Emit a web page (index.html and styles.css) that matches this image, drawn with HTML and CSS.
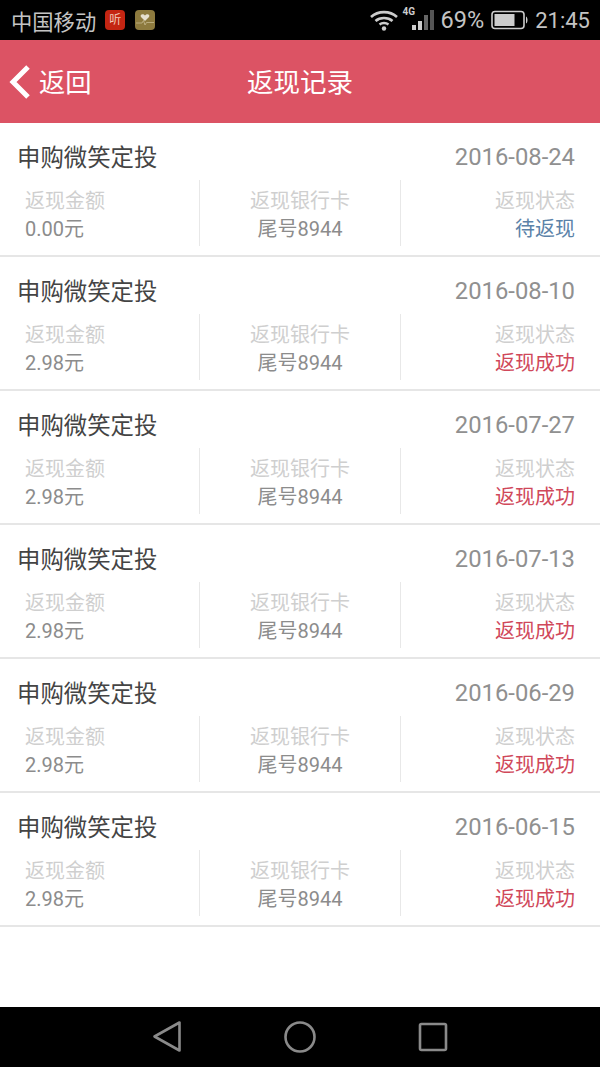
FILE: index.html
```html
<!doctype html>
<html>
  <head>
    <meta charset="utf-8">
    <meta name="viewport" content="width=device-width, initial-scale=1.0">
    <title>返现记录</title>
    <link rel="stylesheet" href="styles.css">
  </head>
  <body>
    <div class="phone">

      <!-- status bar -->
      <div class="status">
        <span class="carrier">中国移动</span>
        <span class="app-icon app-red">听</span>
        <svg class="app-icon" viewBox="0 0 20 20" width="20" height="20">
          <rect width="20" height="20" rx="4" fill="#8d7a3e"/>
          <path d="M10 11 L6 7 C4.500 4.500 8 3 10 5.500 C12 3 15.500 4.500 14 7 Z" fill="#e6e0cf"/>
          <path d="M1 13 H7 L8.500 10.500 L10 15 L11.500 12.500 H19" fill="none" stroke="#c5b98e" stroke-width="0.8"/>
        </svg>
        <span class="status-right">
          <svg class="wifi" viewBox="0 0 30 22" width="30" height="22">
            <path d="M2 8 C9 1.500 21 1.500 28 8" fill="none" stroke="#ccc" stroke-width="2.600"/>
            <path d="M6.500 12 C11 8 19 8 23.500 12" fill="none" stroke="#ccc" stroke-width="2.600"/>
            <path d="M10.500 15.500 C13 13.500 17 13.500 19.500 15.500" fill="none" stroke="#ccc" stroke-width="2.400"/>
            <circle cx="15" cy="19.500" r="2.200" fill="#ccc"/>
          </svg>
          <span class="signal">
            <span class="net">4G</span>
            <span class="bar bar1"></span>
            <span class="bar bar2"></span>
            <span class="bar bar3"></span>
            <span class="bar bar4"></span>
          </span>
          <span class="percent">69%</span>
          <svg class="battery" viewBox="0 0 38 20" width="38" height="20">
            <rect x="1" y="1.500" width="32" height="17" rx="3" fill="none" stroke="#ccc" stroke-width="1.600"/>
            <rect x="3.500" y="4" width="20" height="12" fill="#ccc"/>
            <path d="M35 6.500 C37 7.500 37 12.500 35 13.500 Z" fill="#ccc"/>
          </svg>
          <span class="clock">21:45</span>
        </span>
      </div>

      <!-- header -->
      <div class="header">
        <div class="back">
          <svg viewBox="0 0 24 36" width="24" height="36">
            <path d="M20 3 L5 18 L20 33" fill="none" stroke="#fff" stroke-width="5"/>
          </svg>
          <span class="back-text">返回</span>
        </div>
        <div class="title">返现记录</div>
      </div>

      <!-- list -->
      <div class="list">

        <div class="record">
          <div class="record-top"><span class="name">申购微笑定投</span><span class="date">2016-08-24</span></div>
          <div class="cols">
            <div class="col col-left"><span class="label">返现金额</span><span class="value">0.00元</span></div>
            <div class="col col-mid"><span class="label">返现银行卡</span><span class="value">尾号8944</span></div>
            <div class="col col-right"><span class="label">返现状态</span><span class="value pending">待返现</span></div>
          </div>
        </div>

        <div class="record">
          <div class="record-top"><span class="name">申购微笑定投</span><span class="date">2016-08-10</span></div>
          <div class="cols">
            <div class="col col-left"><span class="label">返现金额</span><span class="value">2.98元</span></div>
            <div class="col col-mid"><span class="label">返现银行卡</span><span class="value">尾号8944</span></div>
            <div class="col col-right"><span class="label">返现状态</span><span class="value success">返现成功</span></div>
          </div>
        </div>

        <div class="record">
          <div class="record-top"><span class="name">申购微笑定投</span><span class="date">2016-07-27</span></div>
          <div class="cols">
            <div class="col col-left"><span class="label">返现金额</span><span class="value">2.98元</span></div>
            <div class="col col-mid"><span class="label">返现银行卡</span><span class="value">尾号8944</span></div>
            <div class="col col-right"><span class="label">返现状态</span><span class="value success">返现成功</span></div>
          </div>
        </div>

        <div class="record">
          <div class="record-top"><span class="name">申购微笑定投</span><span class="date">2016-07-13</span></div>
          <div class="cols">
            <div class="col col-left"><span class="label">返现金额</span><span class="value">2.98元</span></div>
            <div class="col col-mid"><span class="label">返现银行卡</span><span class="value">尾号8944</span></div>
            <div class="col col-right"><span class="label">返现状态</span><span class="value success">返现成功</span></div>
          </div>
        </div>

        <div class="record">
          <div class="record-top"><span class="name">申购微笑定投</span><span class="date">2016-06-29</span></div>
          <div class="cols">
            <div class="col col-left"><span class="label">返现金额</span><span class="value">2.98元</span></div>
            <div class="col col-mid"><span class="label">返现银行卡</span><span class="value">尾号8944</span></div>
            <div class="col col-right"><span class="label">返现状态</span><span class="value success">返现成功</span></div>
          </div>
        </div>

        <div class="record">
          <div class="record-top"><span class="name">申购微笑定投</span><span class="date">2016-06-15</span></div>
          <div class="cols">
            <div class="col col-left"><span class="label">返现金额</span><span class="value">2.98元</span></div>
            <div class="col col-mid"><span class="label">返现银行卡</span><span class="value">尾号8944</span></div>
            <div class="col col-right"><span class="label">返现状态</span><span class="value success">返现成功</span></div>
          </div>
        </div>

      </div>

      <!-- android nav buttons -->
      <div class="nav">
        <svg viewBox="0 0 30 34" width="30" height="34">
          <path d="M27.500 2.500 V30.500 L2.500 16.500 Z" fill="none" stroke="#8a8a8a" stroke-width="2.600" stroke-linejoin="round"/>
        </svg>
        <svg viewBox="0 0 34 34" width="34" height="34">
          <circle cx="17" cy="17" r="14.500" fill="none" stroke="#8a8a8a" stroke-width="2.600"/>
        </svg>
        <svg viewBox="0 0 30 30" width="30" height="30">
          <rect x="2" y="2" width="26" height="26" rx="1.500" fill="none" stroke="#8a8a8a" stroke-width="2.600"/>
        </svg>
      </div>

    </div>
  </body>
</html>
```

FILE: styles.css
```css
* {
  box-sizing: border-box;
}

body {
  margin: 0;
  background-color: white;
  font-family: Roboto, "Noto Sans CJK SC", sans-serif;
}

.phone {
  width: 600px;
  height: 1067px;
  display: flex;
  flex-direction: column;
  overflow: hidden;
}

/* status bar */
.status {
  height: 40px;
  padding: 0 10px 0 11px;
  display: flex;
  align-items: center;
  background-color: black;
  color: #c4c4c4;
}
.carrier {
  font-size: 21.300px;
  margin-right: 9px;
}
.app-icon {
  width: 20px;
  height: 20px;
  margin-right: 10px;
  flex-shrink: 0;
}
.app-red {
  background-color: #c42512;
  border-radius: 4px;
  color: #f0c8b8;
  font-size: 12px;
  line-height: 20px;
  text-align: center;
}
.status-right {
  margin-left: auto;
  display: flex;
  align-items: center;
}
.wifi {
  margin-right: 4px;
}
.signal {
  position: relative;
  width: 31px;
  height: 22px;
  margin-bottom: 2px;
  display: flex;
  align-items: flex-end;
  justify-content: flex-end;
  gap: 2px;
  margin-right: 7px;
}
.net {
  position: absolute;
  left: 0;
  top: -2px;
  font-size: 10px;
  font-weight: bold;
  color: #ccc;
}
.bar {
  width: 4px;
  background-color: #ccc;
}
.bar1 { height: 5px; }
.bar2 { height: 9px; }
.bar3 { height: 15px; background-color: #666; }
.bar4 { height: 20px; background-color: #555; }
.percent {
  font-size: 23.500px;
  margin-right: 7px;
}
.battery {
  margin-right: 6px;
}
.clock {
  font-size: 22px;
}

/* header */
.header {
  position: relative;
  height: 83px;
  padding-bottom: 3px;
  display: flex;
  align-items: center;
  justify-content: center;
  background-color: #dc5364;
  color: white;
}
.title {
  font-size: 26.500px;
}
.back {
  position: absolute;
  left: 8px;
  top: 24px;
  display: flex;
  align-items: center;
  gap: 7px;
  font-size: 26.300px;
}
.back-text {
  margin-top: -4px;
}

/* list */
.list {
  flex: 1;
}
.record {
  height: 134px;
  border-bottom: 2px solid #e6e6e6;
  padding: 0 25px 0 17px;
}
.record-top {
  height: 57px;
  display: flex;
  align-items: center;
  justify-content: space-between;
  padding-top: 9px;
}
.name {
  font-size: 23.400px;
  color: #444;
}
.date {
  margin-top: 2px;
  font-size: 23.800px;
  color: #909090;
}
.cols {
  display: grid;
  grid-template-columns: 182px 202px 174px;
  height: 66px;
}
.col {
  display: flex;
  flex-direction: column;
  padding-top: 7px;
  font-size: 20px;
  line-height: 28px;
}
.col-left {
  padding-left: 8px;
}
.col-mid {
  border-left: 1px solid #e8e8e8;
  border-right: 1px solid #e8e8e8;
  text-align: center;
}
.col-right {
  text-align: right;
}
.label {
  color: #cfcfcf;
}
.value {
  color: #8c8c8c;
}
.pending {
  color: #5b82a8;
}
.success {
  color: #d0485a;
}

/* nav */
.nav {
  height: 60px;
  padding: 0 152px;
  display: flex;
  align-items: center;
  justify-content: space-between;
  background-color: black;
}
```
